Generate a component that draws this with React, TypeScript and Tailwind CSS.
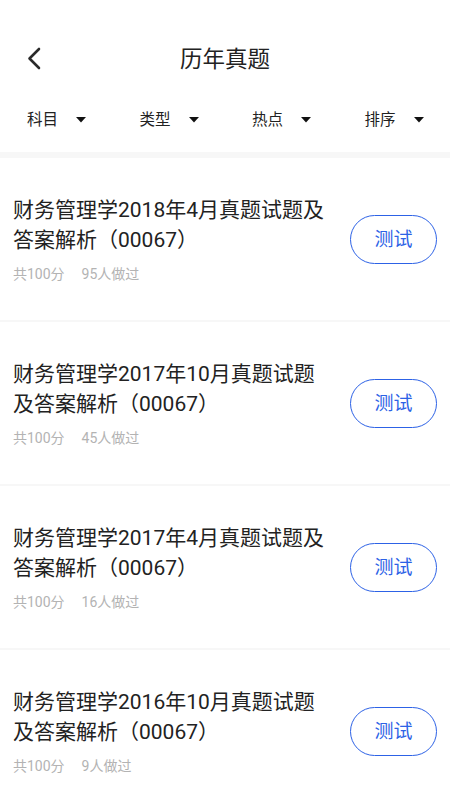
import React from "react";

const items = [
  { title: "财务管理学2018年4月真题试题及答案解析（00067）", count: "95人做过" },
  { title: "财务管理学2017年10月真题试题及答案解析（00067）", count: "45人做过" },
  { title: "财务管理学2017年4月真题试题及答案解析（00067）", count: "16人做过" },
  { title: "财务管理学2016年10月真题试题及答案解析（00067）", count: "9人做过" },
];

const filters = ["科目", "类型", "热点", "排序"];

export default function App() {
  return (
    <div
      className="w-[450px] h-[800px] overflow-hidden bg-white"
      style={{ fontFamily: 'Roboto, "Noto Sans CJK SC", sans-serif' }}
    >
      <div className="h-[29px]" />
      <div className="relative h-[60px] flex items-center justify-center">
        <svg
          className="absolute left-[27px] top-[18px]"
          width="14"
          height="23"
          viewBox="0 0 14 23"
          fill="none"
        >
          <path
            d="M12 2 L2.5 11.5 L12 21"
            stroke="#2a2a2a"
            strokeWidth="2.6"
            strokeLinecap="round"
            strokeLinejoin="round"
          />
        </svg>
        <span className="text-[22.5px] leading-[30px] text-[#222222]">历年真题</span>
      </div>
      <div className="grid grid-cols-4 h-[62px] items-center">
        {filters.map((f) => (
          <div key={f} className="flex items-center pl-[27px]">
            <span className="text-[15.5px] leading-[20px] text-[#222222]">{f}</span>
            <svg className="ml-[18px]" width="10" height="6" viewBox="0 0 10 6">
              <path d="M0 0 H10 L5 5.5 Z" fill="#111111" />
            </svg>
          </div>
        ))}
      </div>
      <div className="mt-[1px] h-[6px] bg-[#f7f7f7]" />
      {items.map((it, i) => (
        <div key={i}>
          <div className="flex items-center pt-[37px] pb-[36px] pl-[13px] pr-[13px]">
            <div className="w-[316px]">
              <div className="text-[21px] leading-[30px] text-[#222222]">{it.title}</div>
              <div className="mt-[9px] flex text-[14px] leading-[20px] text-[#b3b3b3]">
                <span>共100分</span>
                <span className="ml-[17px]">{it.count}</span>
              </div>
            </div>
            <button className="ml-auto w-[87px] h-[49px] rounded-full border-[1.5px] border-[#2d62e6] text-[#2d62e6] text-[19px] leading-none flex items-center justify-center">
              测试
            </button>
          </div>
          <div className="h-[2px] bg-[#f7f7f7]" />
        </div>
      ))}
    </div>
  );
}
